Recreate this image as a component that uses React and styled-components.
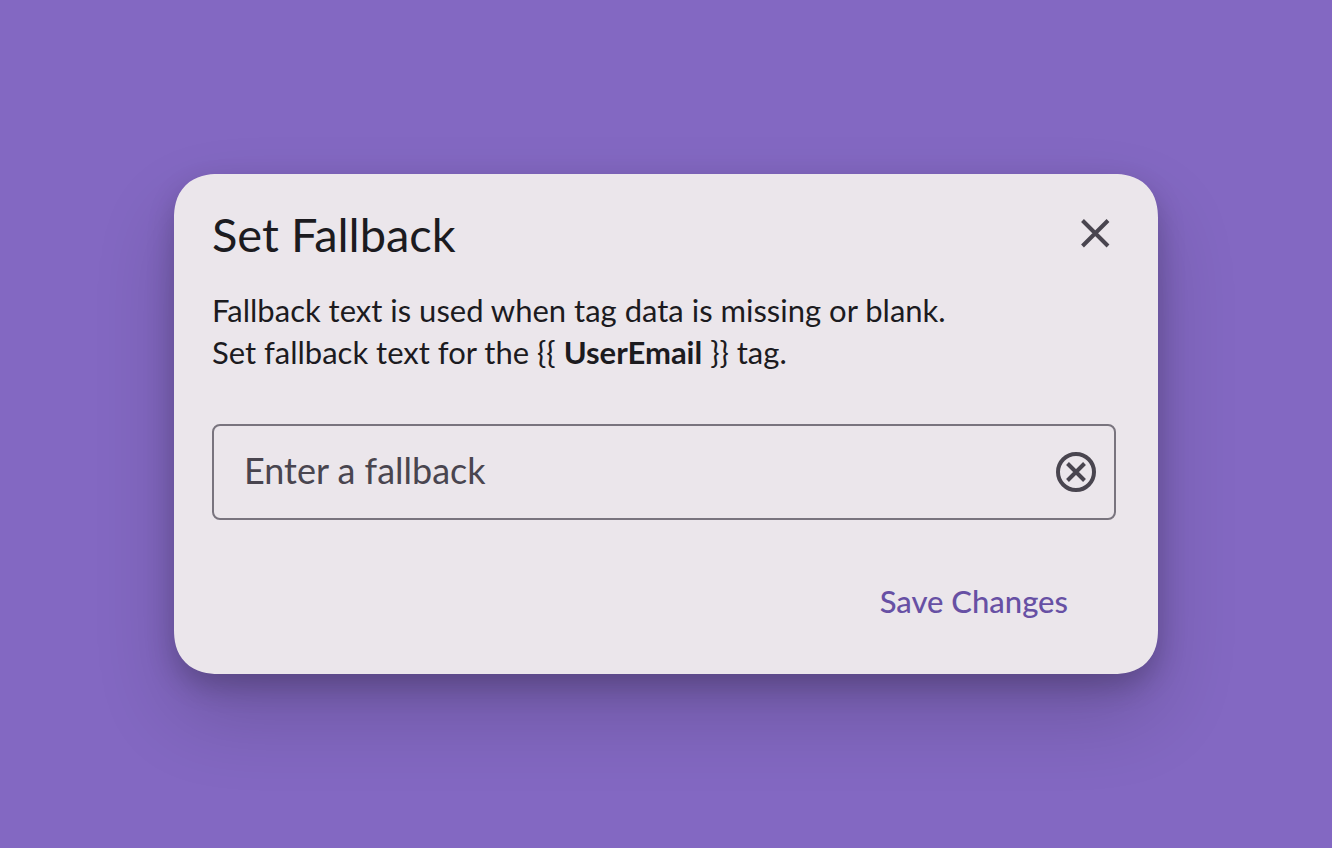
import React, { useState } from 'react';
import styled, { createGlobalStyle } from 'styled-components';

const colors = {
  page: '#8368c2',
  surface: '#ebe6eb',
  text: '#1c1b1f',
  muted: '#49454f',
  outline: '#79747e',
  primary: '#6750a4',
};

const GlobalStyle = createGlobalStyle`
  * {
    box-sizing: border-box;
  }

  body {
    margin: 0;
    background-color: ${colors.page};
    color: ${colors.text};
    font-family: Lato, 'Open Sans', sans-serif;
  }
`;

const Page = styled.main`
  min-height: 100vh;
  padding: 40px;
  display: flex;
  align-items: center;
  justify-content: center;
`;

const Dialog = styled.section`
  width: 100%;
  max-width: 984px;
  padding: 32px 42px 32px 38px;
  background-color: ${colors.surface};
  border-radius: 44px;
  corner-shape: superellipse(1.2);
  box-shadow:
    0 12px 28px rgba(0, 0, 0, 0.2),
    0 40px 80px rgba(0, 0, 0, 0.18);
`;

const Header = styled.header`
  display: flex;
  align-items: center;
  justify-content: space-between;
`;

const Title = styled.h1`
  margin: 0;
  font-size: 47px;
  font-weight: 400;
  line-height: 56px;
`;

const IconButton = styled.button`
  width: 40px;
  height: 40px;
  padding: 0;
  display: flex;
  align-items: center;
  justify-content: center;
  flex-shrink: 0;
  background: none;
  border: none;
  color: ${colors.muted};
  cursor: pointer;
`;

const Description = styled.p`
  margin: 27px 0 51px;
  font-size: 31px;
  line-height: 42px;
`;

const TagName = styled.strong`
  font-weight: 700;
`;

const Field = styled.div`
  height: 96px;
  padding: 0 18px 0 30px;
  display: flex;
  align-items: center;
  border: 2px solid ${colors.outline};
  border-radius: 8px;

  &:focus-within {
    border-color: ${colors.primary};
  }
`;

const Input = styled.input`
  flex: 1;
  min-width: 0;
  height: 92px;
  padding: 0 0 4px;
  background: none;
  border: none;
  outline: none;
  color: ${colors.text};
  font-family: inherit;
  font-size: 36px;

  &::placeholder {
    color: ${colors.muted};
    opacity: 1;
  }
`;

const Actions = styled.footer`
  margin-top: 42px;
  display: flex;
  justify-content: flex-end;
`;

const SaveButton = styled.button`
  height: 80px;
  padding: 0 48px 2px;
  background: none;
  border: none;
  color: ${colors.primary};
  font-family: inherit;
  font-size: 31px;
  font-weight: 500;
  cursor: pointer;
`;

const CloseIcon = () => (
  <svg width="30" height="30" viewBox="0 0 30 30" fill="none" stroke="currentColor" strokeWidth="4" aria-hidden="true">
    <path d="M1.5 1.5 27 27M27 1.5 1.5 27" />
  </svg>
);

const ClearIcon = () => (
  <svg width="40" height="40" viewBox="0 0 40 40" fill="none" stroke="currentColor" strokeWidth="4" aria-hidden="true">
    <circle cx="20" cy="20" r="18" />
    <path d="M11.5 11.5 28.5 28.5M28.5 11.5 11.5 28.5" />
  </svg>
);

const App = () => {
  const [fallback, setFallback] = useState('');

  return (
    <Page>
      <GlobalStyle />
      <Dialog role="dialog" aria-labelledby="fallback-title" aria-describedby="fallback-description">
        <Header>
          <Title id="fallback-title">Set Fallback</Title>
          <IconButton type="button" aria-label="Close">
            <CloseIcon />
          </IconButton>
        </Header>

        <Description id="fallback-description">
          Fallback text is used when tag data is missing or blank.
          <br />
          Set fallback text for the {'{{ '}
          <TagName>UserEmail</TagName>
          {' }}'} tag.
        </Description>

        <Field>
          <Input
            type="text"
            aria-label="Fallback text"
            placeholder="Enter a fallback"
            value={fallback}
            onChange={(e) => setFallback(e.target.value)}
          />
          <IconButton type="button" aria-label="Clear" onClick={() => setFallback('')}>
            <ClearIcon />
          </IconButton>
        </Field>

        <Actions>
          <SaveButton type="button">Save Changes</SaveButton>
        </Actions>
      </Dialog>
    </Page>
  );
};

export default App;
